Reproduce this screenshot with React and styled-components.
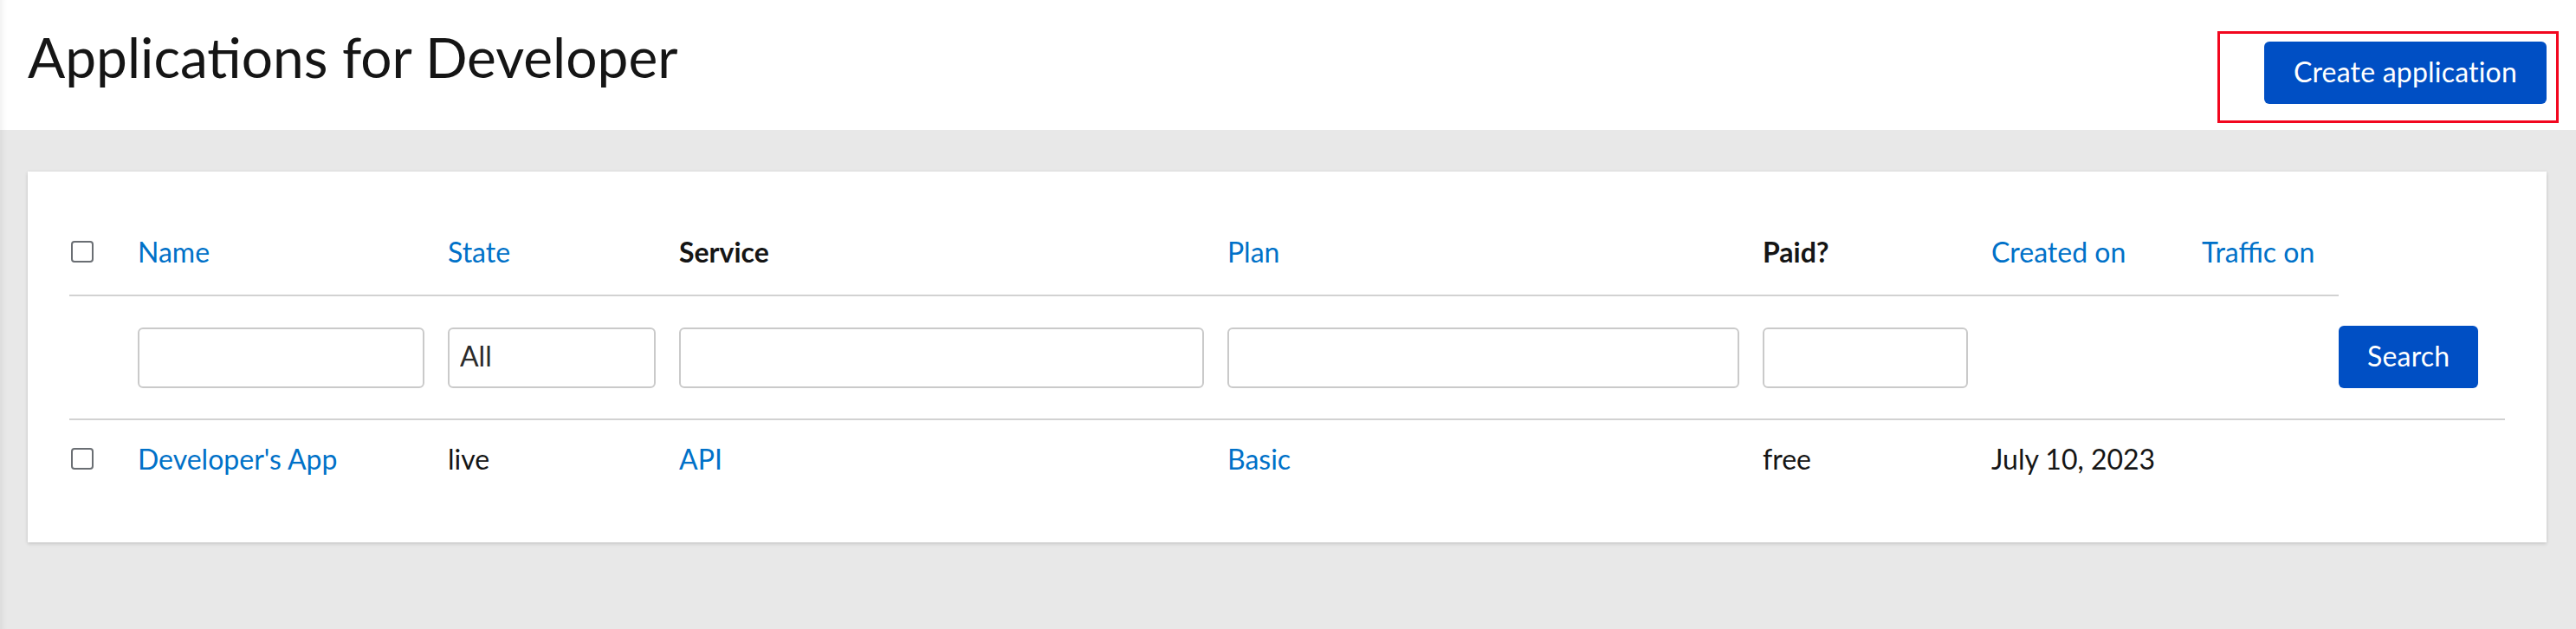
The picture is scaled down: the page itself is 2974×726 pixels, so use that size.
import React from "react";
import styled, { createGlobalStyle } from "styled-components";

const GlobalStyle = createGlobalStyle`
  html, body {
    margin: 0;
    padding: 0;
    background: #e8e8e8;
  }
  body {
    font-family: Lato, "Liberation Sans", sans-serif;
    color: #151515;
  }
`;

const Page = styled.div`
  min-height: 726px;
  background: #e8e8e8;
  box-shadow: inset 9px 0 6px -6px rgba(0, 0, 0, 0.06);
`;

const Header = styled.header`
  background: #fff;
  height: 150px;
  box-sizing: border-box;
  padding: 0 34px 0 32px;
  display: flex;
  justify-content: space-between;
  align-items: flex-start;
  box-shadow: inset 9px 0 6px -6px rgba(0, 0, 0, 0.06);
`;

const Title = styled.h1`
  margin: 34px 0 0;
  font-family: Lato, "Liberation Sans", sans-serif;
  font-weight: 400;
  font-size: 64px;
  line-height: 1;
  color: #151515;
`;

const Highlight = styled.div`
  position: relative;
  margin-top: 48px;
`;

const Annotation = styled.span`
  position: absolute;
  left: -54px;
  right: -14px;
  top: -12px;
  bottom: -22px;
  border: 3px solid #f2071f;
  pointer-events: none;
`;

const PrimaryButton = styled.button`
  display: inline-flex;
  align-items: center;
  justify-content: center;
  box-sizing: border-box;
  height: 72px;
  padding: 0 ${(p) => p.$px || 34}px 4px;
  border: none;
  border-radius: 6px;
  background: #004fc4;
  color: #fff;
  font-family: Lato, "Liberation Sans", sans-serif;
  font-size: 32px;
  font-weight: 400;
  letter-spacing: 0.2px;
  cursor: pointer;
`;

const Content = styled.main`
  padding: 48px 34px 0 32px;
`;

const Card = styled.section`
  background: #fff;
  padding: 48px;
  box-shadow: 0 2px 4px rgba(3, 3, 3, 0.12), 0 0 4px rgba(3, 3, 3, 0.06);
`;

const Table = styled.table`
  width: 100%;
  border-collapse: collapse;
  table-layout: fixed;
  font-size: 32px;
`;

const HeadCell = styled.th`
  height: 95px;
  box-sizing: border-box;
  padding: 0 27px 5px ${(p) => (p.$check ? 2 : 0)}px;
  text-align: left;
  vertical-align: middle;
  font-weight: ${(p) => (p.$bold ? 700 : 400)};
  color: ${(p) => (p.$bold ? "#151515" : "#0071c8")};
  border-bottom: 2px solid #d2d2d2;
  white-space: nowrap;
`;

const FilterCell = styled.td`
  height: 141px;
  padding: 0 27px 0 0;
  vertical-align: middle;
  border-bottom: 2px solid #d2d2d2;
`;

const DataCell = styled.td`
  height: 94px;
  box-sizing: border-box;
  padding: 0 27px 5px ${(p) => (p.$check ? 2 : 0)}px;
  vertical-align: middle;
  color: #151515;
  white-space: nowrap;
`;

const CheckCell = styled.div`
  padding-top: 3px;
`;

const Link = styled.a`
  color: #0071c8;
  text-decoration: none;
  cursor: pointer;
`;

const Checkbox = styled.input.attrs({ type: "checkbox" })`
  appearance: none;
  display: block;
  width: 26px;
  height: 25px;
  margin: 0;
  border: 2px solid #6a6e73;
  border-radius: 4px;
  background: #fff;
  box-sizing: border-box;
`;

const TextInput = styled.input`
  display: block;
  width: 100%;
  height: 70px;
  box-sizing: border-box;
  border: 2px solid #cacaca;
  border-radius: 6px;
  padding: 0 12px 4px;
  font-family: Lato, "Liberation Sans", sans-serif;
  font-size: 32px;
  color: #2b2b2b;
  background: #fff;
  outline: none;
`;

const columns = [79, 358, 267, 633, 618, 264, 243, 158, 192];

export default function App() {
  return (
    <>
      <GlobalStyle />
      <Page>
        <Header>
          <Title>Applications for Developer</Title>
          <Highlight>
            <PrimaryButton>Create application</PrimaryButton>
            <Annotation />
          </Highlight>
        </Header>
        <Content>
          <Card>
            <Table>
              <colgroup>
                {columns.map((w, i) => (
                  <col key={i} style={{ width: w }} />
                ))}
              </colgroup>
              <thead>
                <tr>
                  <HeadCell $check>
                    <Checkbox aria-label="Select all" />
                  </HeadCell>
                  <HeadCell><Link>Name</Link></HeadCell>
                  <HeadCell><Link>State</Link></HeadCell>
                  <HeadCell $bold>Service</HeadCell>
                  <HeadCell><Link>Plan</Link></HeadCell>
                  <HeadCell $bold>Paid?</HeadCell>
                  <HeadCell><Link>Created on</Link></HeadCell>
                  <HeadCell><Link>Traffic on</Link></HeadCell>
                </tr>
                <tr>
                  <FilterCell />
                  <FilterCell><TextInput /></FilterCell>
                  <FilterCell><TextInput defaultValue="All" /></FilterCell>
                  <FilterCell><TextInput /></FilterCell>
                  <FilterCell><TextInput /></FilterCell>
                  <FilterCell><TextInput /></FilterCell>
                  <FilterCell />
                  <FilterCell />
                  <FilterCell>
                    <PrimaryButton $px={33}>Search</PrimaryButton>
                  </FilterCell>
                </tr>
              </thead>
              <tbody>
                <tr>
                  <DataCell $check>
                    <Checkbox aria-label="Select row" />
                  </DataCell>
                  <DataCell><Link>Developer's App</Link></DataCell>
                  <DataCell>live</DataCell>
                  <DataCell><Link>API</Link></DataCell>
                  <DataCell><Link>Basic</Link></DataCell>
                  <DataCell>free</DataCell>
                  <DataCell>July 10, 2023</DataCell>
                  <DataCell />
                  <DataCell />
                </tr>
              </tbody>
            </Table>
          </Card>
        </Content>
      </Page>
    </>
  );
}
